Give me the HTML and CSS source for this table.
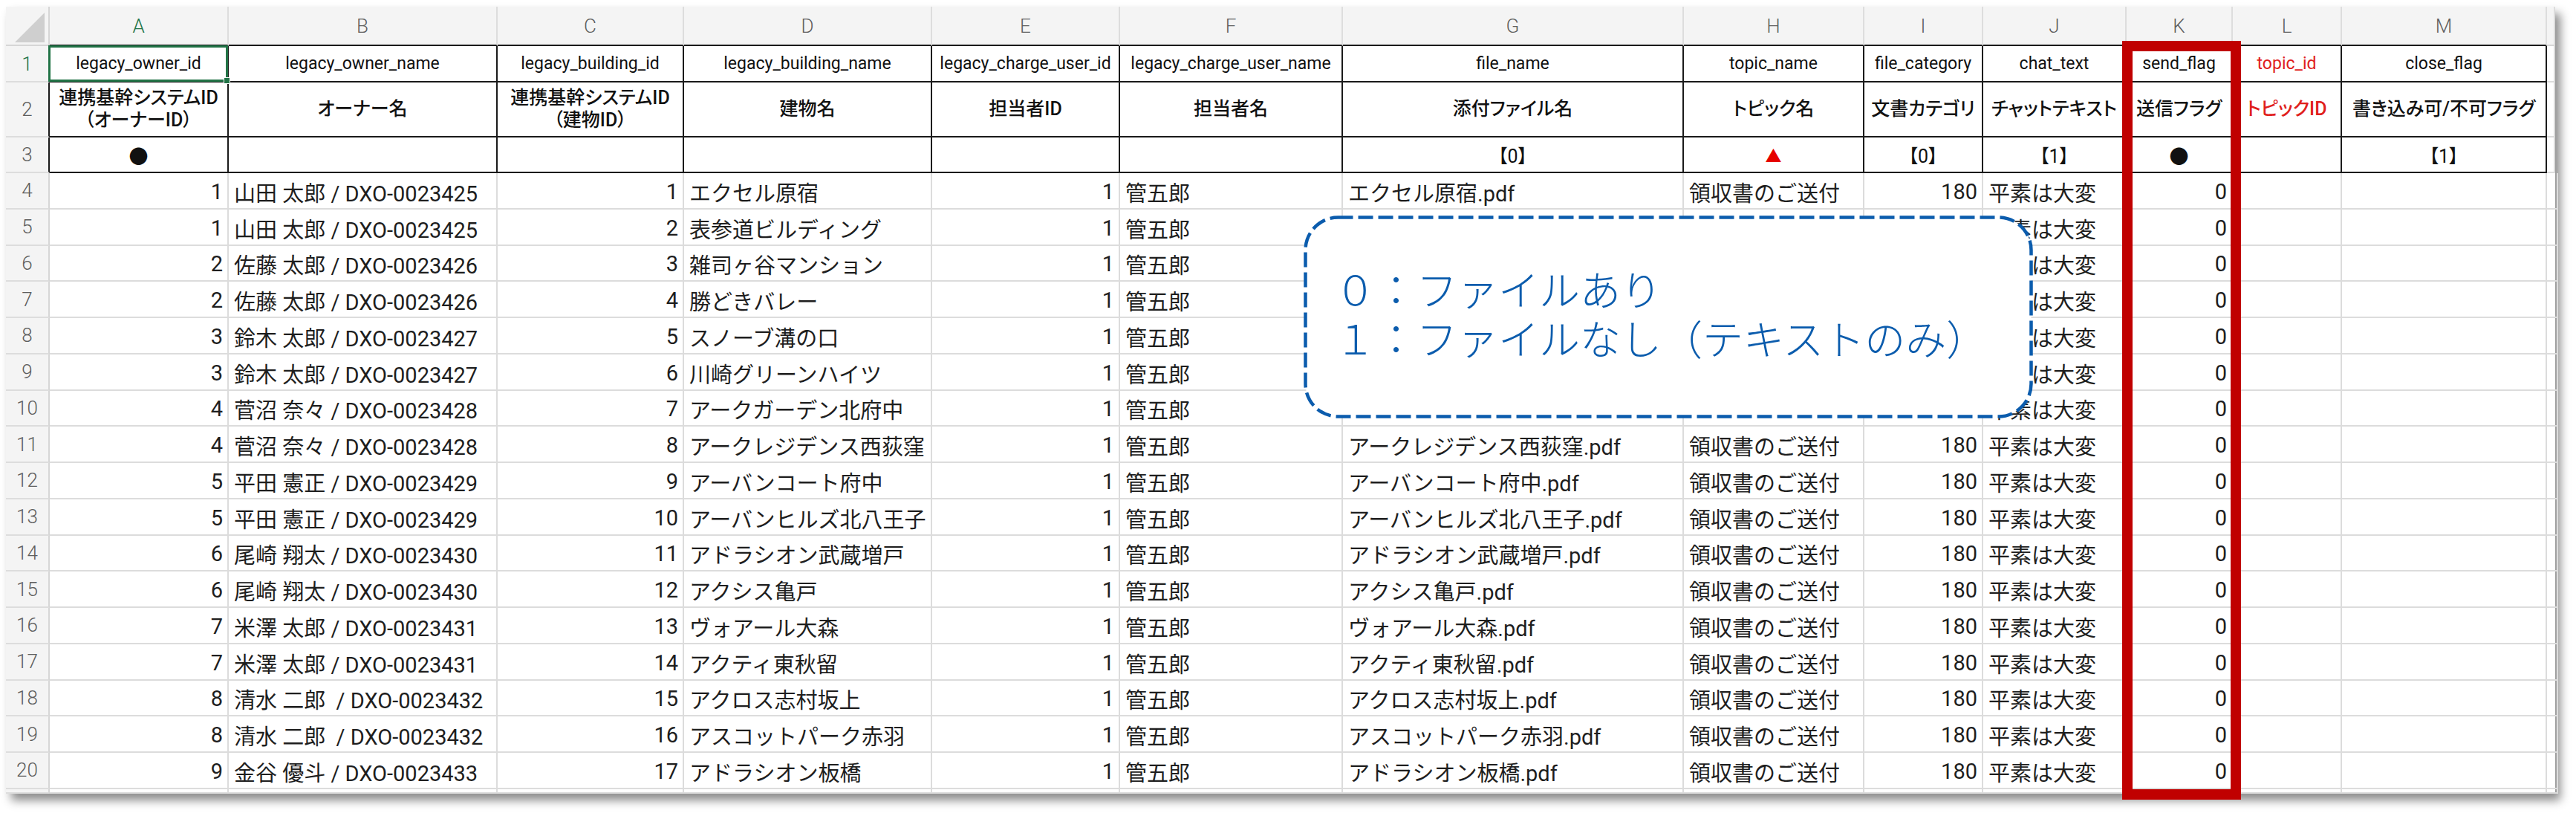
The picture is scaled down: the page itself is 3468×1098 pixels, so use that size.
FILE: index.html
```html
<!DOCTYPE html>
<html lang="ja">
<head>
<meta charset="utf-8">
<title>sheet</title>
<link rel="stylesheet" href="styles.css">
</head>
<body>
<div class="sheet">
  <div class="row colhead">
    <div class="corner"><span class="tri"></span></div>
    <div class="ch sel">A</div><div class="ch">B</div><div class="ch">C</div><div class="ch">D</div><div class="ch">E</div><div class="ch">F</div><div class="ch">G</div><div class="ch">H</div><div class="ch">I</div><div class="ch">J</div><div class="ch">K</div><div class="ch">L</div><div class="ch">M</div><div class="ch n"></div>
  </div>
  <div class="row hdr r1">
    <div class="rh sel">1</div>
    <div class="c a1">legacy_owner_id<span class="selbox"><span class="handle"></span></span></div>
    <div class="c">legacy_owner_name</div>
    <div class="c">legacy_building_id</div>
    <div class="c">legacy_building_name</div>
    <div class="c">legacy_charge_user_id</div>
    <div class="c">legacy_charge_user_name</div>
    <div class="c">file_name</div>
    <div class="c">topic_name</div>
    <div class="c">file_category</div>
    <div class="c">chat_text</div>
    <div class="c">send_flag</div>
    <div class="c red">topic_id</div>
    <div class="c">close_flag</div>
    <div class="c n"></div>
  </div>
  <div class="row hdr r2">
    <div class="rh">2</div>
    <div class="c">連携基幹システムID<br>（オーナーID）</div>
    <div class="c">オーナー名</div>
    <div class="c">連携基幹システムID<br>（建物ID）</div>
    <div class="c">建物名</div>
    <div class="c">担当者ID</div>
    <div class="c">担当者名</div>
    <div class="c">添付ファイル名</div>
    <div class="c">トピック名</div>
    <div class="c">文書カテゴリ</div>
    <div class="c">チャットテキスト</div>
    <div class="c">送信フラグ</div>
    <div class="c red">トピックID</div>
    <div class="c">書き込み可/不可フラグ</div>
    <div class="c n"></div>
  </div>
  <div class="row hdr r3">
    <div class="rh">3</div>
    <div class="c dot">●</div>
    <div class="c"></div>
    <div class="c"></div>
    <div class="c"></div>
    <div class="c"></div>
    <div class="c"></div>
    <div class="c">【0】</div>
    <div class="c tri-red">▲</div>
    <div class="c">【0】</div>
    <div class="c">【1】</div>
    <div class="c dot">●</div>
    <div class="c"></div>
    <div class="c">【1】</div>
    <div class="c n"></div>
  </div>

  <div class="row rd">
    <div class="rh">4</div><div class="c num">1</div><div class="c">山田 太郎 / DXO-0023425</div><div class="c num">1</div><div class="c">エクセル原宿</div><div class="c num">1</div><div class="c">管五郎</div><div class="c">エクセル原宿.pdf</div><div class="c">領収書のご送付</div><div class="c num">180</div><div class="c">平素は大変</div><div class="c num">0</div><div class="c"></div><div class="c"></div><div class="c n"></div>
  </div>
  <div class="row rd">
    <div class="rh">5</div><div class="c num">1</div><div class="c">山田 太郎 / DXO-0023425</div><div class="c num">2</div><div class="c">表参道ビルディング</div><div class="c num">1</div><div class="c">管五郎</div><div class="c"></div><div class="c"></div><div class="c num"></div><div class="c">平素は大変</div><div class="c num">0</div><div class="c"></div><div class="c"></div><div class="c n"></div>
  </div>
  <div class="row rd">
    <div class="rh">6</div><div class="c num">2</div><div class="c">佐藤 太郎 / DXO-0023426</div><div class="c num">3</div><div class="c">雑司ヶ谷マンション</div><div class="c num">1</div><div class="c">管五郎</div><div class="c"></div><div class="c"></div><div class="c num"></div><div class="c">平素は大変</div><div class="c num">0</div><div class="c"></div><div class="c"></div><div class="c n"></div>
  </div>
  <div class="row rd">
    <div class="rh">7</div><div class="c num">2</div><div class="c">佐藤 太郎 / DXO-0023426</div><div class="c num">4</div><div class="c">勝どきバレー</div><div class="c num">1</div><div class="c">管五郎</div><div class="c"></div><div class="c"></div><div class="c num"></div><div class="c">平素は大変</div><div class="c num">0</div><div class="c"></div><div class="c"></div><div class="c n"></div>
  </div>
  <div class="row rd">
    <div class="rh">8</div><div class="c num">3</div><div class="c">鈴木 太郎 / DXO-0023427</div><div class="c num">5</div><div class="c">スノーブ溝の口</div><div class="c num">1</div><div class="c">管五郎</div><div class="c"></div><div class="c"></div><div class="c num"></div><div class="c">平素は大変</div><div class="c num">0</div><div class="c"></div><div class="c"></div><div class="c n"></div>
  </div>
  <div class="row rd">
    <div class="rh">9</div><div class="c num">3</div><div class="c">鈴木 太郎 / DXO-0023427</div><div class="c num">6</div><div class="c">川崎グリーンハイツ</div><div class="c num">1</div><div class="c">管五郎</div><div class="c"></div><div class="c"></div><div class="c num"></div><div class="c">平素は大変</div><div class="c num">0</div><div class="c"></div><div class="c"></div><div class="c n"></div>
  </div>
  <div class="row rd">
    <div class="rh">10</div><div class="c num">4</div><div class="c">菅沼 奈々 / DXO-0023428</div><div class="c num">7</div><div class="c">アークガーデン北府中</div><div class="c num">1</div><div class="c">管五郎</div><div class="c"></div><div class="c"></div><div class="c num"></div><div class="c">平素は大変</div><div class="c num">0</div><div class="c"></div><div class="c"></div><div class="c n"></div>
  </div>
  <div class="row rd">
    <div class="rh">11</div><div class="c num">4</div><div class="c">菅沼 奈々 / DXO-0023428</div><div class="c num">8</div><div class="c">アークレジデンス西荻窪</div><div class="c num">1</div><div class="c">管五郎</div><div class="c">アークレジデンス西荻窪.pdf</div><div class="c">領収書のご送付</div><div class="c num">180</div><div class="c">平素は大変</div><div class="c num">0</div><div class="c"></div><div class="c"></div><div class="c n"></div>
  </div>
  <div class="row rd">
    <div class="rh">12</div><div class="c num">5</div><div class="c">平田 憲正 / DXO-0023429</div><div class="c num">9</div><div class="c">アーバンコート府中</div><div class="c num">1</div><div class="c">管五郎</div><div class="c">アーバンコート府中.pdf</div><div class="c">領収書のご送付</div><div class="c num">180</div><div class="c">平素は大変</div><div class="c num">0</div><div class="c"></div><div class="c"></div><div class="c n"></div>
  </div>
  <div class="row rd">
    <div class="rh">13</div><div class="c num">5</div><div class="c">平田 憲正 / DXO-0023429</div><div class="c num">10</div><div class="c">アーバンヒルズ北八王子</div><div class="c num">1</div><div class="c">管五郎</div><div class="c">アーバンヒルズ北八王子.pdf</div><div class="c">領収書のご送付</div><div class="c num">180</div><div class="c">平素は大変</div><div class="c num">0</div><div class="c"></div><div class="c"></div><div class="c n"></div>
  </div>
  <div class="row rd">
    <div class="rh">14</div><div class="c num">6</div><div class="c">尾崎 翔太 / DXO-0023430</div><div class="c num">11</div><div class="c">アドラシオン武蔵増戸</div><div class="c num">1</div><div class="c">管五郎</div><div class="c">アドラシオン武蔵増戸.pdf</div><div class="c">領収書のご送付</div><div class="c num">180</div><div class="c">平素は大変</div><div class="c num">0</div><div class="c"></div><div class="c"></div><div class="c n"></div>
  </div>
  <div class="row rd">
    <div class="rh">15</div><div class="c num">6</div><div class="c">尾崎 翔太 / DXO-0023430</div><div class="c num">12</div><div class="c">アクシス亀戸</div><div class="c num">1</div><div class="c">管五郎</div><div class="c">アクシス亀戸.pdf</div><div class="c">領収書のご送付</div><div class="c num">180</div><div class="c">平素は大変</div><div class="c num">0</div><div class="c"></div><div class="c"></div><div class="c n"></div>
  </div>
  <div class="row rd">
    <div class="rh">16</div><div class="c num">7</div><div class="c">米澤 太郎 / DXO-0023431</div><div class="c num">13</div><div class="c">ヴォアール大森</div><div class="c num">1</div><div class="c">管五郎</div><div class="c">ヴォアール大森.pdf</div><div class="c">領収書のご送付</div><div class="c num">180</div><div class="c">平素は大変</div><div class="c num">0</div><div class="c"></div><div class="c"></div><div class="c n"></div>
  </div>
  <div class="row rd">
    <div class="rh">17</div><div class="c num">7</div><div class="c">米澤 太郎 / DXO-0023431</div><div class="c num">14</div><div class="c">アクティ東秋留</div><div class="c num">1</div><div class="c">管五郎</div><div class="c">アクティ東秋留.pdf</div><div class="c">領収書のご送付</div><div class="c num">180</div><div class="c">平素は大変</div><div class="c num">0</div><div class="c"></div><div class="c"></div><div class="c n"></div>
  </div>
  <div class="row rd">
    <div class="rh">18</div><div class="c num">8</div><div class="c">清水 二郎&nbsp; / DXO-0023432</div><div class="c num">15</div><div class="c">アクロス志村坂上</div><div class="c num">1</div><div class="c">管五郎</div><div class="c">アクロス志村坂上.pdf</div><div class="c">領収書のご送付</div><div class="c num">180</div><div class="c">平素は大変</div><div class="c num">0</div><div class="c"></div><div class="c"></div><div class="c n"></div>
  </div>
  <div class="row rd">
    <div class="rh">19</div><div class="c num">8</div><div class="c">清水 二郎&nbsp; / DXO-0023432</div><div class="c num">16</div><div class="c">アスコットパーク赤羽</div><div class="c num">1</div><div class="c">管五郎</div><div class="c">アスコットパーク赤羽.pdf</div><div class="c">領収書のご送付</div><div class="c num">180</div><div class="c">平素は大変</div><div class="c num">0</div><div class="c"></div><div class="c"></div><div class="c n"></div>
  </div>
  <div class="row rd">
    <div class="rh">20</div><div class="c num">9</div><div class="c">金谷 優斗 / DXO-0023433</div><div class="c num">17</div><div class="c">アドラシオン板橋</div><div class="c num">1</div><div class="c">管五郎</div><div class="c">アドラシオン板橋.pdf</div><div class="c">領収書のご送付</div><div class="c num">180</div><div class="c">平素は大変</div><div class="c num">0</div><div class="c"></div><div class="c"></div><div class="c n"></div>
  </div>
  <div class="row rlast">
    <div class="rh"></div><div class="c"></div><div class="c"></div><div class="c"></div><div class="c"></div><div class="c"></div><div class="c"></div><div class="c"></div><div class="c"></div><div class="c"></div><div class="c"></div><div class="c"></div><div class="c"></div><div class="c"></div><div class="c n"></div>
  </div>

  <div class="callout">
    <svg class="dash" viewBox="0 0 982 273" preserveAspectRatio="none" aria-hidden="true">
      <rect x="2.5" y="2.5" width="977" height="268" rx="44" ry="44" fill="#ffffff" stroke="#0b5cad" stroke-width="4.5" stroke-dasharray="20 7"/>
    </svg>
    <div class="callout-text">
      <p>０：ファイルあり</p>
      <p>１：ファイルなし（テキストのみ）</p>
    </div>
  </div>
  <div class="redbox"></div>
</div>
</body>
</html>
```

FILE: styles.css
```css
* { box-sizing: border-box; }
html, body { margin: 0; background: #ffffff; }
body {
  width: 3468px;
  height: 1098px;
  overflow: hidden;
  padding: 9px 0 0 8px;
  font-family: Roboto, "Noto Sans CJK JP", sans-serif;
  color: #1e1e1e;
}
.sheet {
  position: relative;
  width: 3432px;
  height: 1059px;
  display: flex;
  flex-direction: column;
  background: #ffffff;
  box-shadow: 7px 9px 12px rgba(0, 0, 0, 0.45);
}
.row {
  display: grid;
  grid-template-columns: 59px 241px 362px 251px 334px 253px 300px 459px 243px 160px 193px 143px 147px 276px 11px;
  flex: none;
}
.colhead { height: 53px; }
.r1 { height: 49px; }
.r2 { height: 74px; }
.r3 { height: 48px; }
.rd { height: 48.75px; }
.rlast { height: 6.25px; }

.corner {
  position: relative;
  background: #f4f4f4;
  border-right: 2px solid #d6d6d6;
  border-bottom: 2px solid #d6d6d6;
}
.tri {
  position: absolute;
  right: 5px;
  bottom: 3px;
  width: 0;
  height: 0;
  border-left: 40px solid transparent;
  border-bottom: 40px solid #cfcfcf;
}
.ch {
  display: flex;
  align-items: center;
  justify-content: center;
  background: #f4f4f4;
  border-right: 2px solid #dddddd;
  border-bottom: 2px solid #1a1a1a;
  font-size: 26px;
  font-weight: 300;
  color: #5e5e5e;
}
.ch.n { border-bottom-color: #d6d6d6; }
.sel { color: #217346; }

.rh {
  display: flex;
  align-items: center;
  justify-content: center;
  background: #f4f4f4;
  border-right: 2px solid #d6d6d6;
  border-bottom: 2px solid #dddddd;
  font-size: 26px;
  font-weight: 300;
  color: #5e5e5e;
  overflow: hidden;
}
.rh.sel { color: #217346; }
.hdr .rh { border-right-color: #1a1a1a; }

.c {
  display: flex;
  align-items: center;
  padding: 3px 6px 0 7px;
  border-right: 2px solid #dcdcdc;
  border-bottom: 2px solid #dcdcdc;
  white-space: nowrap;
  overflow: hidden;
  font-size: 29px;
}
.num { justify-content: flex-end; }

.hdr .c {
  border-color: #1a1a1a;
  justify-content: center;
  text-align: center;
  padding: 0 2px;
  color: #111111;
}
.hdr .c.n { border-color: #dcdcdc; }
.r1 .c { font-size: 23px; }
.r2 .c {
  font-size: 25px;
  font-weight: 500;
  line-height: 30px;
  white-space: normal;
  font-feature-settings: "palt" 1;
}
.r3 .c {
  font-size: 25px;
  font-feature-settings: "palt" 1;
}
.hdr .c.red { color: #e0201c; }
.r3 .dot { font-size: 26px; }
.r3 .tri-red { color: #e60000; font-size: 22px; }

.c.a1 { position: relative; overflow: visible; z-index: 2; }
.selbox {
  position: absolute;
  left: -2px;
  top: -1px;
  right: -1px;
  bottom: -1px;
  border: 3px solid #217346;
}
.handle {
  position: absolute;
  right: -6px;
  bottom: -6px;
  width: 9px;
  height: 9px;
  background: #217346;
  border: 1px solid #ffffff;
}

.callout {
  position: absolute;
  left: 1747px;
  top: 281px;
  width: 982px;
  height: 273px;
  z-index: 3;
}
.dash {
  position: absolute;
  inset: 0;
  width: 100%;
  height: 100%;
}
.callout-text {
  position: relative;
  padding: 64px 0 0 42px;
  font-family: "Noto Sans CJK JP", sans-serif;
  font-weight: 300;
  font-size: 55px;
  line-height: 66px;
  color: #0b5cad;
}
.callout-text p { margin: 0; white-space: nowrap; }

.redbox {
  position: absolute;
  left: 2849px;
  top: 46px;
  width: 160px;
  height: 1021px;
  border: 14px solid #c00000;
  z-index: 4;
}
```
